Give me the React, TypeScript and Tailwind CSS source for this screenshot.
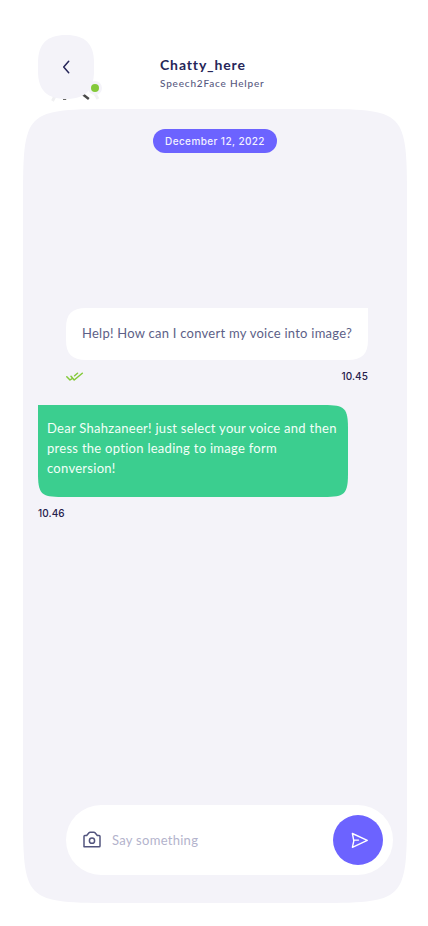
import React from 'react';

function Header() {
  return (
    <header className="relative flex h-[109px] shrink-0 pl-[38px] pt-[35px]">
      <svg className="absolute left-[48px] top-[85px]" width="56" height="20" viewBox="0 0 56 20" fill="none">
        <path d="M7 11L4.5 16" stroke="#f0f0f2" strokeWidth="3" />
        <path d="M15 14.2H18.2" stroke="#444" strokeWidth="1.2" />
        <path d="M35 9.5L40.8 14" stroke="#4a4a4a" strokeWidth="2.4" />
        <path d="M46.5 8L50 14" stroke="#f1f1f3" strokeWidth="3" />
      </svg>
      <button className="relative flex h-16 w-14 items-center justify-center bg-[#f4f3f9] [clip-path:path('M0,28C0,8.8,8.8,0,28,0C47.2,0,56,8.8,56,28V36C56,55.2,47.2,64,28,64C8.8,64,0,55.2,0,36Z')]">
        <svg width="56" height="64" viewBox="0 0 56 64" fill="none" stroke="#262659" strokeWidth="1.5" strokeLinecap="round" strokeLinejoin="round">
          <path d="M30.7 26.2L25.7 32L30.7 37.8" />
        </svg>
      </button>
      <span className="absolute left-[88px] top-[81px] flex h-[14px] w-[14px] items-center justify-center rounded-full bg-[#f4f3f9]">
        <span className="h-2 w-2 rounded-full bg-[#84c93a]" />
      </span>
      <div className="ml-[66px] pt-5 whitespace-nowrap">
        <h1 className="h-[19px] text-[14px] font-bold leading-[19px] tracking-[0.86px] text-[#262659]">Chatty_here</h1>
        <p className="mt-[2px] text-[10px] font-medium leading-[15px] tracking-[0.81px] text-[#575980]">Speech2Face Helper</p>
      </div>
    </header>
  );
}

function Composer() {
  return (
    <div className="ml-[43px] mt-auto mb-[28px] flex h-[70px] w-[327px] items-center rounded-full bg-white pl-[17px] pr-[10px]">
      <svg width="18" height="18" viewBox="0 0 18 18" fill="none" stroke="#52547e" strokeWidth="1.5" strokeLinejoin="round">
        <path d="M1 15.8V5.4Q1 4.6 1.8 4.6H3.7L6 1.8Q6.5 1.2 7.2 1.2H10.8Q11.5 1.2 12 1.8L14.3 4.6H16.2Q17 4.6 17 5.4V15Q17 15.8 16.2 15.8Z" />
        <circle cx="9" cy="9.7" r="2.6" />
      </svg>
      <span className="ml-[11px] text-[13px] leading-5 tracking-[0.28px] text-[#b3b3cc]">Say something</span>
      <button className="ml-auto flex h-[50px] w-[50px] items-center justify-center rounded-full bg-[#6c63ff]">
        <svg width="50" height="50" viewBox="0 0 50 50" fill="none" stroke="white" strokeWidth="1.4" strokeLinecap="round" strokeLinejoin="round">
          <path d="M19.4 18.5L34.3 25.3L19.4 32.3L20.8 25.8L19.4 18.5ZM20.8 25.1H25.5" />
        </svg>
      </button>
    </div>
  );
}

export default function App() {
  return (
    <main className="flex h-[926px] w-[428px] flex-col overflow-hidden bg-white font-['Lato',sans-serif]">
      <Header />
      <section className="ml-[23px] flex h-[794px] w-[384px] shrink-0 flex-col bg-[#f4f3f9] [clip-path:path('M0,96C0,0,0,0,96,0H288C384,0,384,0,384,96V698C384,794,384,794,288,794H96C0,794,0,794,0,698Z')]">
        <div className="ml-[130px] mt-5 flex h-6 w-[124px] items-center justify-center rounded-full bg-[#6c63ff] font-['Inter',sans-serif] text-[10px] font-medium tracking-[0.4px] whitespace-nowrap text-[#f3f1ff]">December 12, 2022</div>

        <div className="ml-[43px] mt-[155px] flex h-[52px] w-[302px] items-center bg-white pl-4 text-[13px] tracking-[0.25px] whitespace-nowrap text-[#5d5f87] [clip-path:path('M0,20C0,6,6,0,20,0H302V32C302,46,296,52,282,52H20C6,52,0,46,0,32Z')]">Help! How can I convert my voice into image?</div>
        <div className="ml-[43px] mt-[8px] flex h-4 w-[302px] items-center justify-between font-['Inter',sans-serif] text-[10px] font-medium tracking-[0.1px] text-[#24204c]">
          <svg className="mt-px" width="18" height="10" viewBox="0 0 18 10" fill="none" stroke="#84c93a" strokeWidth="1.5" strokeLinecap="round" strokeLinejoin="round">
            <path d="M.8 4.8L4 8L6 6.6M8.6 3.7L11.5 1.2M5 4.3L8.2 8L16.3 1.2" />
          </svg>
          <time>10.45</time>
        </div>

        <div className="ml-[15px] mt-[21px] h-[92px] w-[310px] bg-[#3bce8f] pl-[9px] pt-[13px] text-[13px] leading-5 tracking-[0.28px] whitespace-nowrap text-[#f2fff8] [clip-path:path('M0,0H286C307,0,310,3,310,24V68C310,89,307,92,286,92H24C3,92,0,89,0,68Z')]">
          <p>Dear Shahzaneer! just select your voice and then</p>
          <p>press the option leading to image form</p>
          <p>conversion!</p>
        </div>
        <time className="ml-[15px] mt-[8px] font-['Inter',sans-serif] text-[10px] font-medium leading-4 tracking-[0.1px] text-[#24204c]">10.46</time>
        <Composer />
      </section>
    </main>
  );
}
